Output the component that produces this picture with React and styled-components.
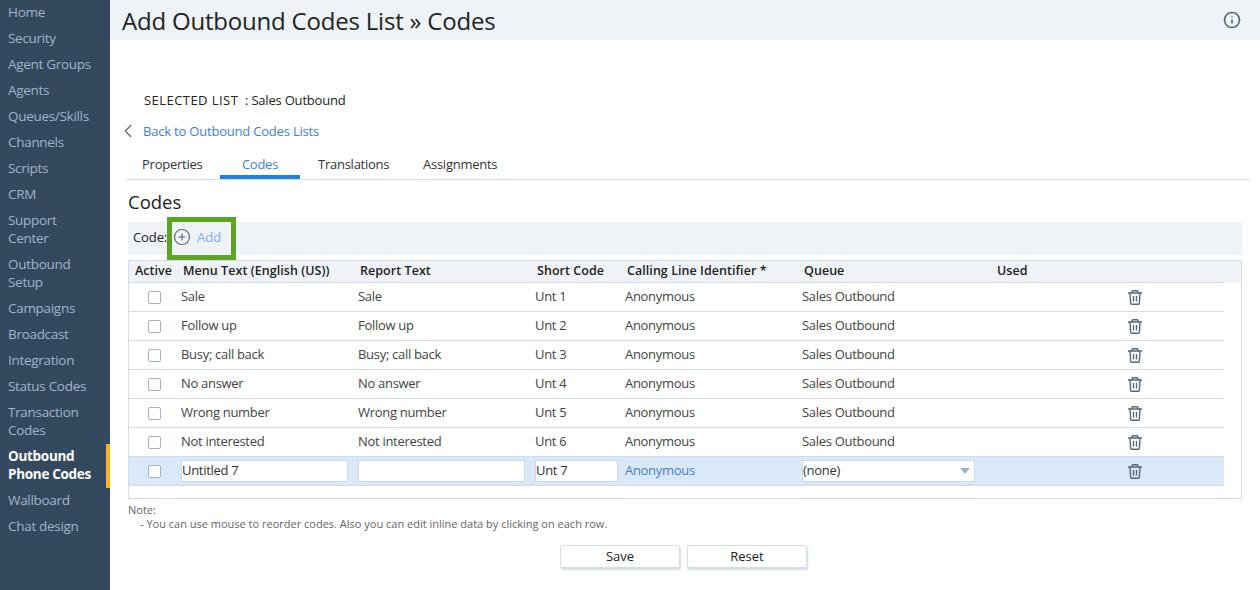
import React from "react";
import styled, { createGlobalStyle } from "styled-components";
import { Info, CirclePlus, ChevronLeft } from "lucide-react";

const Global = createGlobalStyle`
  html, body { margin: 0; padding: 0; height: 590px; overflow: hidden; background: #fff; }
  body { font-family: "Open Sans", "Noto Sans", sans-serif; font-size: 13px; color: #333; }
  * { box-sizing: border-box; }
`;

const Shell = styled.div`display: flex; width: 1260px; height: 590px; overflow: hidden;`;
const Sidebar = styled.nav`width: 110px; flex: none; background: #35495e; margin-top: -1px; height: 591px;`;
const NavItem = styled.div`
  position: relative;
  padding: 4px 4px 4px 8px;
  line-height: 18px;
  font-size: 13.5px;
  letter-spacing: -0.3px;
  color: ${p => (p.$active ? "#fff" : "#9fb3cb")};
  font-weight: ${p => (p.$active ? 700 : 400)};
  &::after {
    content: "";
    display: ${p => (p.$active ? "block" : "none")};
    position: absolute; right: 0; top: 1px; bottom: -1px; width: 4px; background: #fdb122;
  }
`;
const Main = styled.main`flex: 1; min-width: 0;`;
const Header = styled.header`
  height: 40px; background: #eff2f7; display: flex; align-items: center; justify-content: space-between;
  padding: 0 19px 0 12px; font-size: 24px; color: #222; letter-spacing: -0.2px;
`;
const InfoIcon = styled(Info)`color: #5b6b7c;`;
const Body = styled.div`padding: 51px 18px 0 18px;`;
const Selected = styled.div`padding-left: 16px; line-height: 18px; color: #222; letter-spacing: -0.2px; display: flex;`;
const SelectedLabel = styled.span`width: 101px; letter-spacing: 0.45px; white-space: nowrap;`;
const Back = styled.div`display: flex; align-items: center; margin: 13px 0 0 -11px; height: 18px; line-height: 18px; color: #3f7fd9; gap: 4px; letter-spacing: -0.2px;`;
const BackIcon = styled(ChevronLeft)`color: #5b6b7c; flex: none;`;
const Tabs = styled.div`display: flex; margin: 12px -8px 0 -2px; height: 28px; border-bottom: 1px solid #d3dde9; padding-left: 16px; letter-spacing: -0.25px;`;
const Tab = styled.div`
  width: ${p => p.$w}px; line-height: 24px; text-align: ${p => (p.$active ? "center" : "left")};
  color: ${p => (p.$active ? "#3f7fd9" : "#333")};
  height: 27px;
  border-bottom: ${p => (p.$active ? "4px solid #1f82e0" : "none")};
`;
const Title = styled.h2`margin: 11px 0 0 0; font-size: 18.5px; font-weight: 400; line-height: 22px; color: #222;`;
const Toolbar = styled.div`height: 33px; margin-top: 9px; background: #eff2f7; display: flex; align-items: center; padding-left: 5px; width: 1114px;`;
const CodeLabel = styled.span`color: #222; width: 34px; padding-bottom: 3px; letter-spacing: -0.1px;`;
const AddBox = styled.div`
  display: flex; align-items: center; gap: 6px; width: 69px; height: 43px; border: 5px solid #5fa324;
  padding: 0 0 3px 1px; flex: none; color: #7aaef0; position: relative;
`;
const PlusIcon = styled(CirclePlus)`color: #5b6b7c; flex: none;`;
const TableBox = styled.div`margin-top: 5px; width: 1114px; height: 239px; border: 1px solid #d3dde9;`;
const HeadBg = styled.div`background: #eff2f7;`;
const Row = styled.div`
  display: grid;
  grid-template-columns: 52px 177px 177px 90px 177px 193px 129px 22px;
  width: 1095px; height: ${p => (p.$head ? "22px" : "29px")}; align-items: center;
  border-bottom: 1px solid #d3dde9;
  background: ${p => (p.$edit ? "#d9e9f8" : "transparent")};
`;
const HeadCell = styled.div`font-weight: 600; padding: 0 0 2px 2px; color: #222; white-space: nowrap; font-size: 12.5px; letter-spacing: 0.05px;`;
const ActiveHead = styled(HeadCell)`padding-left: 6px;`;
const Cell = styled.div`white-space: nowrap; padding-bottom: 2px; letter-spacing: -0.3px; color: ${p => (p.$link ? "#3f7fd9" : "#444")};`;
const CheckCell = styled.div`padding-left: 19px; display: flex;`;
const Check = styled.span`width: 13px; height: 13px; border: 1px solid #9fb3d1; border-radius: 2px; background: #fff; display: block;`;
const Field = styled.div`
  width: ${p => p.$w}px; height: 22px; background: #fff; border: 1px solid #cddbe9; padding: 0 4px 2px 0;
  line-height: 18px; color: #333; letter-spacing: -0.3px; display: flex; justify-content: space-between; align-items: center;
`;
const Arrow = styled.span`width: 0; height: 0; margin-top: 2px; border-left: 5px solid transparent; border-right: 5px solid transparent; border-top: 6px solid #9fb0cc;`;
const TrashIcon = styled.svg`justify-self: center;`;
const Note = styled.div`margin-top: 4px; font-size: 11px; line-height: 14px; color: #666;`;
const NoteLine = styled.div`padding-left: 12px;`;
const Actions = styled.div`display: flex; gap: 7px; margin: 14px 0 0 432px;`;
const Btn = styled.button`
  width: 120px; height: 23px; background: #fff; border: 1px solid #d3dde9; border-radius: 2px; font: inherit; color: #222;
  box-shadow: 1px 2px 2px #d3dde9; padding: 0 0 2px;
`;

const Trash = () => (
  <TrashIcon width="14" height="15" viewBox="0 0 14 15" fill="none" stroke="#56677a" strokeWidth="1.4">
    <path d="M0 3h14M4 3V1.600C4 1 4.400 .7 5 .7h4c.6 0 1 .3 1 .9V3M2 3l.6 10c0 .8.6 1.300 1.300 1.300h6.200c.7 0 1.300-.5 1.300-1.300L12 3M5.500 6v5.500M8.500 6v5.500" />
  </TrashIcon>
);

const nav = [
  ["Home"], ["Security"], ["Agent Groups"], ["Agents"], ["Queues/Skills"], ["Channels"], ["Scripts"], ["CRM"],
  ["Support", "Center"], ["Outbound", "Setup"], ["Campaigns"], ["Broadcast"], ["Integration"], ["Status Codes"],
  ["Transaction", "Codes"], ["Outbound", "Phone Codes"], ["Wallboard"], ["Chat design"],
];
const rows = ["Sale", "Follow up", "Busy; call back", "No answer", "Wrong number", "Not interested"];

export default function App() {
  return (
    <Shell>
      <Global />
      <Sidebar>
        {nav.map((n, i) => (
          <NavItem key={i} $active={i === 15}>
            {n.map((l, j) => <div key={j}>{l}</div>)}
          </NavItem>
        ))}
      </Sidebar>
      <Main>
        <Header>
          <span>Add Outbound Codes List » Codes</span>
          <InfoIcon size={18} strokeWidth={2.2} />
        </Header>
        <Body>
          <Selected><SelectedLabel>SELECTED LIST</SelectedLabel><span>: Sales Outbound</span></Selected>
          <Back><BackIcon size={22} strokeWidth={1.5} />Back to Outbound Codes Lists</Back>
          <Tabs>
            <Tab $w={78}>Properties</Tab>
            <Tab $w={80} $active>Codes</Tab>
            <Tab $w={18} />
            <Tab $w={105}>Translations</Tab>
            <Tab $w={100}>Assignments</Tab>
          </Tabs>
          <Title>Codes</Title>
          <Toolbar>
            <CodeLabel>Code:</CodeLabel>
            <AddBox><PlusIcon size={18} strokeWidth={1.6} />Add</AddBox>
          </Toolbar>
          <TableBox>
            <HeadBg>
              <Row $head>
                <ActiveHead>Active</ActiveHead>
                <HeadCell>Menu Text (English (US))</HeadCell>
                <HeadCell>Report Text</HeadCell>
                <HeadCell>Short Code</HeadCell>
                <HeadCell>Calling Line Identifier *</HeadCell>
                <HeadCell>Queue</HeadCell>
                <HeadCell>Used</HeadCell>
                <div />
              </Row>
            </HeadBg>
            {rows.map((r, i) => (
              <Row key={r}>
                <CheckCell><Check /></CheckCell>
                <Cell>{r}</Cell>
                <Cell>{r}</Cell>
                <Cell>Unt {i + 1}</Cell>
                <Cell>Anonymous</Cell>
                <Cell>Sales Outbound</Cell>
                <div />
                <Trash />
              </Row>
            ))}
            <Row $edit>
              <CheckCell><Check /></CheckCell>
              <div><Field $w={167}>Untitled 7</Field></div>
              <div><Field $w={167} /></div>
              <div><Field $w={83}>Unt 7</Field></div>
              <Cell $link>Anonymous</Cell>
              <div><Field $w={173}>(none)<Arrow /></Field></div>
              <div />
              <Trash />
            </Row>
          </TableBox>
          <Note>
            Note:
            <NoteLine>- You can use mouse to reorder codes. Also you can edit inline data by clicking on each row.</NoteLine>
          </Note>
          <Actions>
            <Btn>Save</Btn>
            <Btn>Reset</Btn>
          </Actions>
        </Body>
      </Main>
    </Shell>
  );
}
